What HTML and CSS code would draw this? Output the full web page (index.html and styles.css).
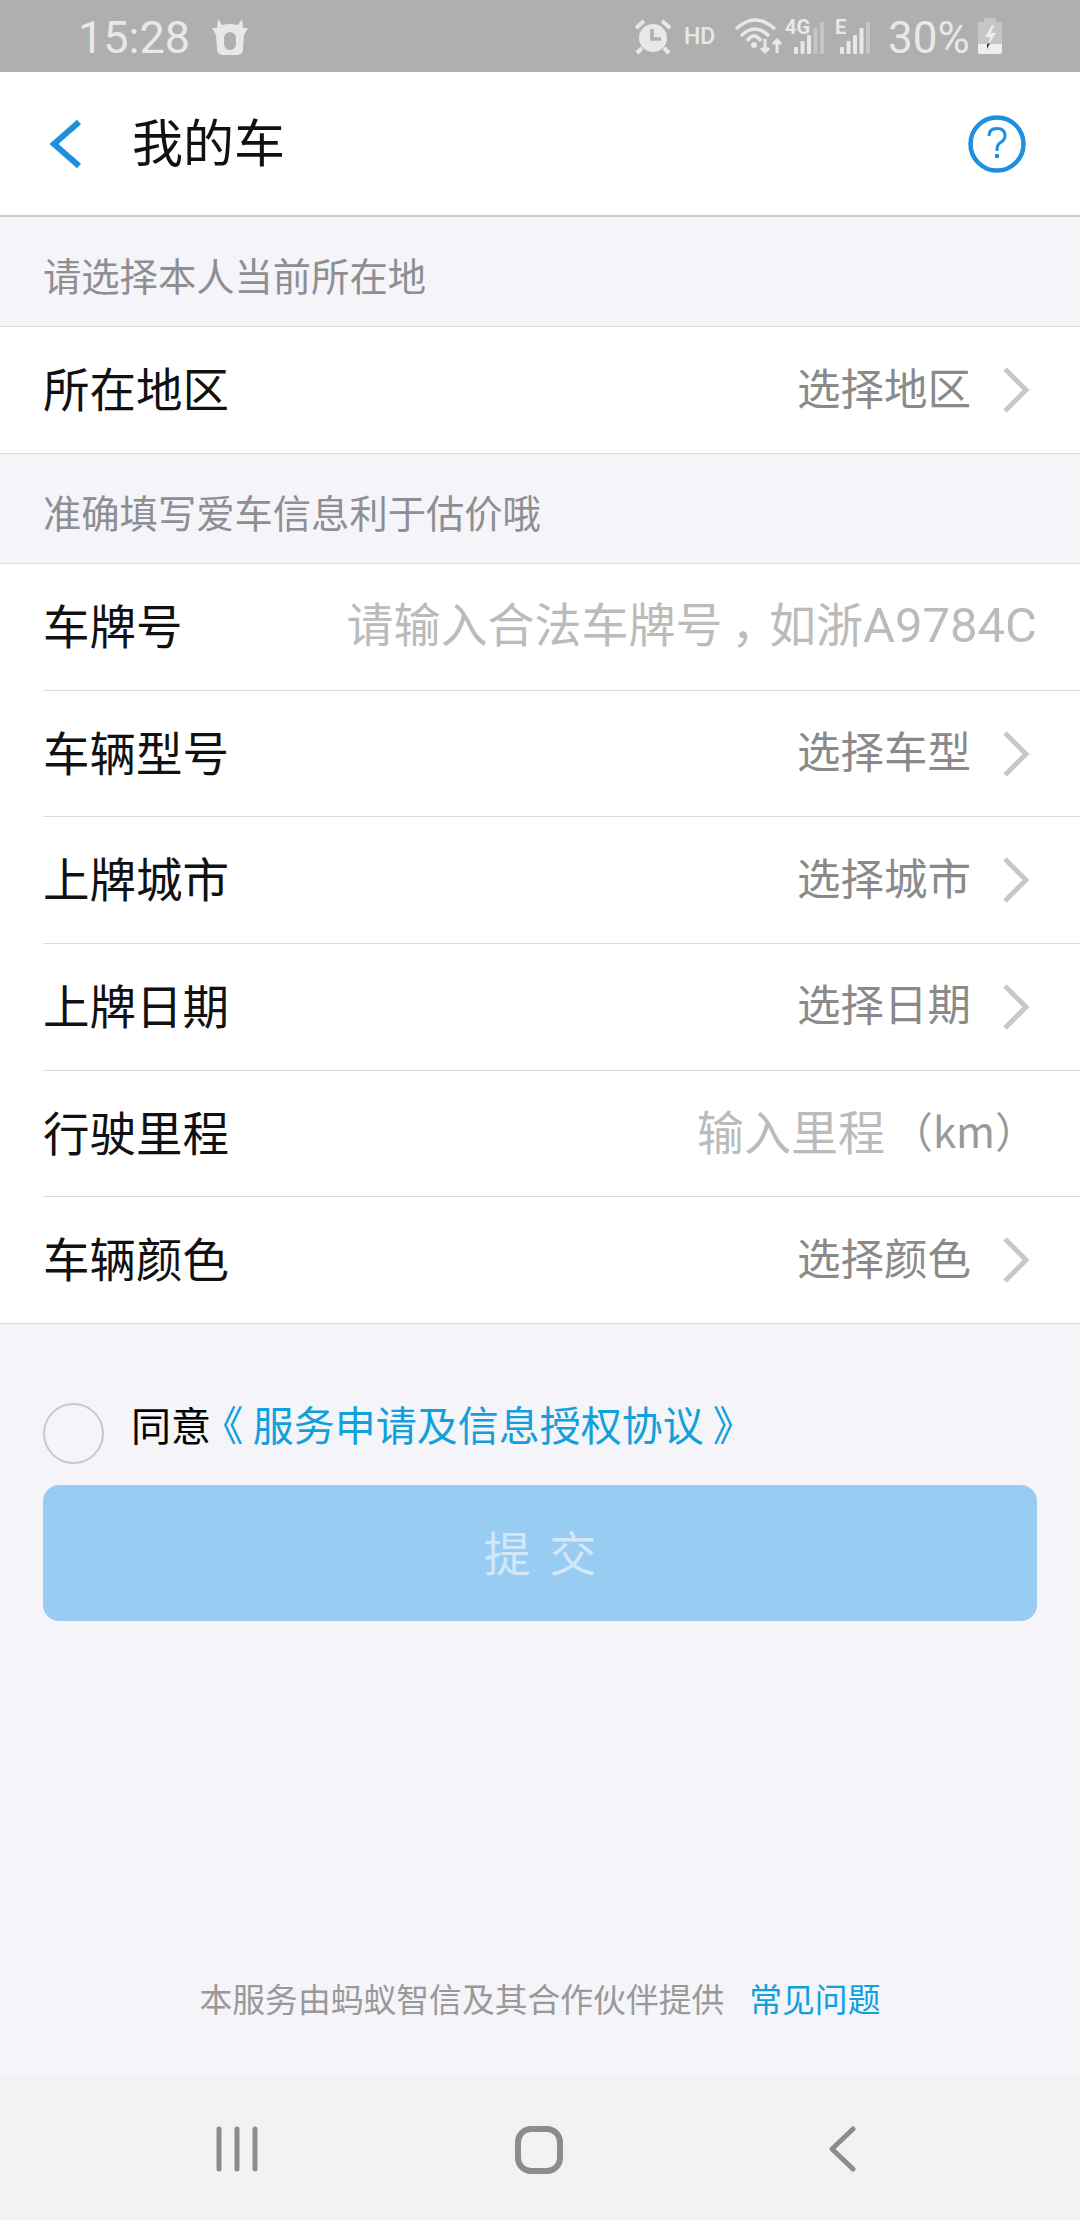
FILE: index.html
```html
<!DOCTYPE html>
<html lang="zh">
<head>
<meta charset="utf-8">
<title>我的车</title>
<link rel="stylesheet" href="styles.css">
</head>
<body>
<div class="screen">
  <div class="status">
    <span class="time">15:28</span>
    <svg class="bull" width="36" height="38" viewBox="0 0 36 38"><path d="M0 10L5 10 6 1 10 7Q18 5 26 7L30 1 31 10 36 10 32 17 31 31Q31 37 24 37H12Q5 37 5 31L4 17Z" fill="#e8e8e8"/><rect x="12" y="14" width="12" height="18" rx="6" fill="#afafaf"/></svg>
    <div class="status-right">
      <svg class="alarm" width="38" height="36" viewBox="0 0 38 36"><circle cx="19" cy="19" r="14" fill="#e8e8e8"/><path d="M2 9l8-7M36 9l-8-7M8 29l-5 5M30 29l5 5" stroke="#e8e8e8" stroke-width="4" fill="none"/><path d="M18 10v10h9" stroke="#afafaf" stroke-width="3.500" fill="none"/></svg>
      <span class="hd">HD</span>
      <svg class="wifi" width="50" height="38" viewBox="0 0 50 38"><path d="M2 12Q21-6 41 12M7 19Q21 5 35 19M13 24Q20 14 27 24" stroke="#e8e8e8" stroke-width="3.500" fill="none"/><circle cx="20" cy="28" r="3" fill="#e8e8e8"/><path d="M31 22v13M27 31l4 4 4-4M43 36V23M39 27l4-4 4 4" stroke="#e8e8e8" stroke-width="3" fill="none"/></svg>
      <svg class="sig sig-4g" width="42" height="46" viewBox="0 -4 42 46"><text class="sig-text" x="0" y="17">4G</text><rect x="9" y="30" width="4" height="7" rx="1" fill="#e8e8e8"/><rect x="15.500" y="24" width="4" height="13" rx="1" fill="#e8e8e8"/><rect x="22" y="18" width="4" height="19" rx="1" fill="#e8e8e8"/><rect x="28.500" y="11" width="4" height="26" rx="1" fill="#c6c6c6"/><rect x="35" y="5" width="4" height="32" rx="1" fill="#c6c6c6"/></svg>
      <svg class="sig sig-e" width="36" height="46" viewBox="0 -4 36 46"><text class="sig-text" x="0" y="17">E</text><rect x="5" y="30" width="4" height="7" rx="1" fill="#e8e8e8"/><rect x="11.500" y="24" width="4" height="13" rx="1" fill="#e8e8e8"/><rect x="18" y="18" width="4" height="19" rx="1" fill="#e8e8e8"/><rect x="24.500" y="11" width="4" height="26" rx="1" fill="#e8e8e8"/><rect x="31" y="5" width="4" height="32" rx="1" fill="#c6c6c6"/></svg>
      <span class="pct">30%</span>
      <svg class="battery" width="24" height="36" viewBox="0 0 24 36"><path d="M6 0h12v4h6v22H0V4h6z" fill="#c6c6c6"/><path d="M0 26h24v8q0 2-2 2H2q-2 0-2-2z" fill="#eeeeee"/><path d="M14 7l-7 12h5l-2 8 8-12h-5l3-8z" fill="#eeeeee"/><path d="M9 26l3-1-3 6z" fill="#333"/></svg>
    </div>
  </div>

  <header class="appbar">
    <svg class="back" width="32" height="48" viewBox="0 0 32 48"><path d="M29 2L4 24l25 22" stroke="#1e8fdf" stroke-width="6" fill="none"/></svg>
    <h1 class="title">我的车</h1>
    <svg class="help" width="58" height="58" viewBox="0 0 58 58"><circle cx="29" cy="29" r="26.500" fill="none" stroke="#1e8fdf" stroke-width="4.500"/><path d="M21 21q0-7.500 8-7.500 8 0 8 7 0 4.500-4.500 7-3.500 2.200-3.500 7v1.500" fill="none" stroke="#1e8fdf" stroke-width="3"/><circle cx="29" cy="41" r="2.300" fill="#1e8fdf"/></svg>
  </header>

  <div class="section-label"><span>请选择本人当前所在地</span></div>
  <div class="group group-single">
    <div class="row row-nav"><span class="row-label">所在地区</span><span class="value">选择地区</span><svg class="chev" width="28" height="46" viewBox="0 0 28 46"><path d="M3 2l21 21L3 44" fill="none" stroke="#c8c8c8" stroke-width="5"/></svg></div>
  </div>

  <div class="section-label"><span>准确填写爱车信息利于估价哦</span></div>
  <div class="group group-form">
    <div class="row"><span class="row-label">车牌号</span><span class="placeholder plate">请输入合法车牌号<span class="comma">，</span>如浙<span class="plate-latin">A9784C</span></span></div>
    <div class="row row-nav"><span class="row-label">车辆型号</span><span class="value">选择车型</span><svg class="chev" width="28" height="46" viewBox="0 0 28 46"><path d="M3 2l21 21L3 44" fill="none" stroke="#c8c8c8" stroke-width="5"/></svg></div>
    <div class="row row-nav"><span class="row-label">上牌城市</span><span class="value">选择城市</span><svg class="chev" width="28" height="46" viewBox="0 0 28 46"><path d="M3 2l21 21L3 44" fill="none" stroke="#c8c8c8" stroke-width="5"/></svg></div>
    <div class="row row-nav"><span class="row-label">上牌日期</span><span class="value">选择日期</span><svg class="chev" width="28" height="46" viewBox="0 0 28 46"><path d="M3 2l21 21L3 44" fill="none" stroke="#c8c8c8" stroke-width="5"/></svg></div>
    <div class="row"><span class="row-label">行驶里程</span><span class="placeholder">输入里程</span><span class="unit">（km）</span></div>
    <div class="row row-nav"><span class="row-label">车辆颜色</span><span class="value">选择颜色</span><svg class="chev" width="28" height="46" viewBox="0 0 28 46"><path d="M3 2l21 21L3 44" fill="none" stroke="#c8c8c8" stroke-width="5"/></svg></div>
  </div>

  <div class="agree">
    <span class="radio"></span>
    <span class="agree-text">同意<span class="link agree-link"><span class="quote">《</span> 服务申请及信息授权协议 》</span></span>
  </div>
  <button class="submit">提 交</button>

  <div class="foot">本服务由蚂蚁智信及其合作伙伴提供<span class="link foot-link">常见问题</span></div>

  <nav class="navbar">
    <svg width="42" height="46" viewBox="0 0 42 46"><path d="M3 3v40M21 3v40M39 3v40" stroke="#8c8c8c" stroke-width="5" stroke-linecap="round"/></svg>
    <svg width="48" height="48" viewBox="0 0 48 48"><rect x="3" y="3" width="42" height="42" rx="13" fill="none" stroke="#8c8c8c" stroke-width="6"/></svg>
    <svg width="28" height="46" viewBox="0 0 28 46"><path d="M25 3L4 23l21 20" fill="none" stroke="#8c8c8c" stroke-width="5" stroke-linecap="round" stroke-linejoin="round"/></svg>
  </nav>
</div>
</body>
</html>
```

FILE: styles.css
```css
* { box-sizing: border-box; }
html, body { margin: 0; padding: 0; }
body {
  width: 1080px;
  height: 2220px;
  overflow: hidden;
  font-family: "Noto Sans CJK SC", Roboto, sans-serif;
  background: #f4f4f9;
}
.screen {
  width: 1080px;
  height: 2220px;
  display: flex;
  flex-direction: column;
}

/* status bar */
.status {
  height: 72px;
  flex: none;
  background: #afafaf;
  color: #e8e8e8;
  display: flex;
  align-items: center;
  padding: 0 78px;
  font-family: Roboto, sans-serif;
}
.time { font-size: 45px; line-height: 72px; font-weight: 400; margin-top: 4px; }
.bull { margin-left: 22px; margin-top: 1px; }
.status-right { margin-left: auto; display: flex; align-items: center; }
.alarm { margin-top: 2px; }
.hd { font-size: 23px; font-weight: 500; width: 30px; margin-left: 12px; white-space: nowrap; }
.wifi { margin-left: 20px; }
.sig-4g { margin-left: 1px; }
.sig-e { margin-left: 8px; }
.sig-text { font-family: Roboto, sans-serif; font-size: 20px; font-weight: 700; fill: #e8e8e8; }
.pct { font-size: 44px; font-weight: 400; width: 80px; margin-left: 17px; margin-top: 4px; white-space: nowrap; }
.battery { margin-left: 10px; }

/* app bar */
.appbar {
  height: 145px;
  flex: none;
  background: #fff;
  border-bottom: 2px solid #cdcdd5;
  display: flex;
  align-items: center;
  padding: 0 54px 0 50px;
}
.title { margin: 0 0 6px 50px; font-size: 51px; font-weight: 400; color: #111; line-height: 1; }
.help { margin-left: auto; }

/* sections */
.section-label {
  height: 109px;
  flex: none;
  padding: 6px 0 0 43px;
  display: flex;
  align-items: center;
  font-size: 38.300px;
  color: #8e8e93;
}
.group {
  background: #fff;
  border-top: 1px solid #dcdcdf;
  border-bottom: 1px solid #dcdcdf;
  flex: none;
}
.group-single { height: 128px; display: flex; padding-left: 43px; }
.group-form { height: 761px; display: flex; flex-direction: column; padding-left: 43px; }
.row {
  flex: 1;
  display: flex;
  align-items: center;
  padding-right: 43px;
  border-bottom: 1px solid #dcdcdf;
}
.row-nav { padding-right: 50px; }
.row:last-child { border-bottom: 0; }
.row-label { font-size: 46.500px; color: #111; margin-right: auto; margin-bottom: 7px; }
.value { font-size: 43.500px; color: #8a8a8a; margin-right: 31px; margin-bottom: 8px; }
.chev { flex: none; }
.placeholder { font-size: 47px; color: #bbbbbb; margin-bottom: 8px; }
.plate { white-space: nowrap; font-family: Roboto, "Noto Sans CJK SC", sans-serif; line-height: 1.45; margin-bottom: 3px; }
.plate-latin { font-size: 49px; }
.comma { font-feature-settings: "palt"; margin-left: 12px; margin-right: 11px; }
.unit { font-size: 42px; color: #999; margin-left: 6px; margin-bottom: 8px; }

/* agreement */
.agree {
  flex: none;
  display: flex;
  align-items: flex-start;
  padding: 79px 0 0 43px;
  height: 161px;
}
.radio {
  width: 61px;
  height: 61px;
  border-radius: 50%;
  border: 2.500px solid #c9c9c9;
  flex: none;
  margin-right: 27px;
}
.agree-text { font-size: 40px; line-height: 48px; color: #000; margin-top: -4px; white-space: nowrap; }
.link { color: #11a0dc; }
.agree-link { font-size: 41px; }
.quote { font-feature-settings: "palt"; margin-left: 11px; margin-right: 1px; }
.submit {
  flex: none;
  width: 994px;
  height: 136px;
  margin-left: 43px;
  border: 0;
  border-radius: 16px;
  background: #99ccf3;
  color: #d2e8f9;
  font-family: inherit;
  font-size: 47px;
  letter-spacing: 4px;
  padding: 0 0 6px 4px;
}

/* footer */
.foot {
  margin-top: auto;
  height: 102px;
  flex: none;
  display: flex;
  justify-content: center;
  font-size: 32.800px;
  color: #999;
  line-height: 48px;
}
.foot-link { margin-left: 25px; }
.navbar {
  height: 144px;
  flex: none;
  background: #f2f2f2;
  display: flex;
  align-items: flex-start;
  padding-top: 50px;
}
.navbar svg:nth-child(1) { margin-left: 216px; }
.navbar svg:nth-child(2) { margin-left: 257px; }
.navbar svg:nth-child(3) { margin-left: 265px; }
```
